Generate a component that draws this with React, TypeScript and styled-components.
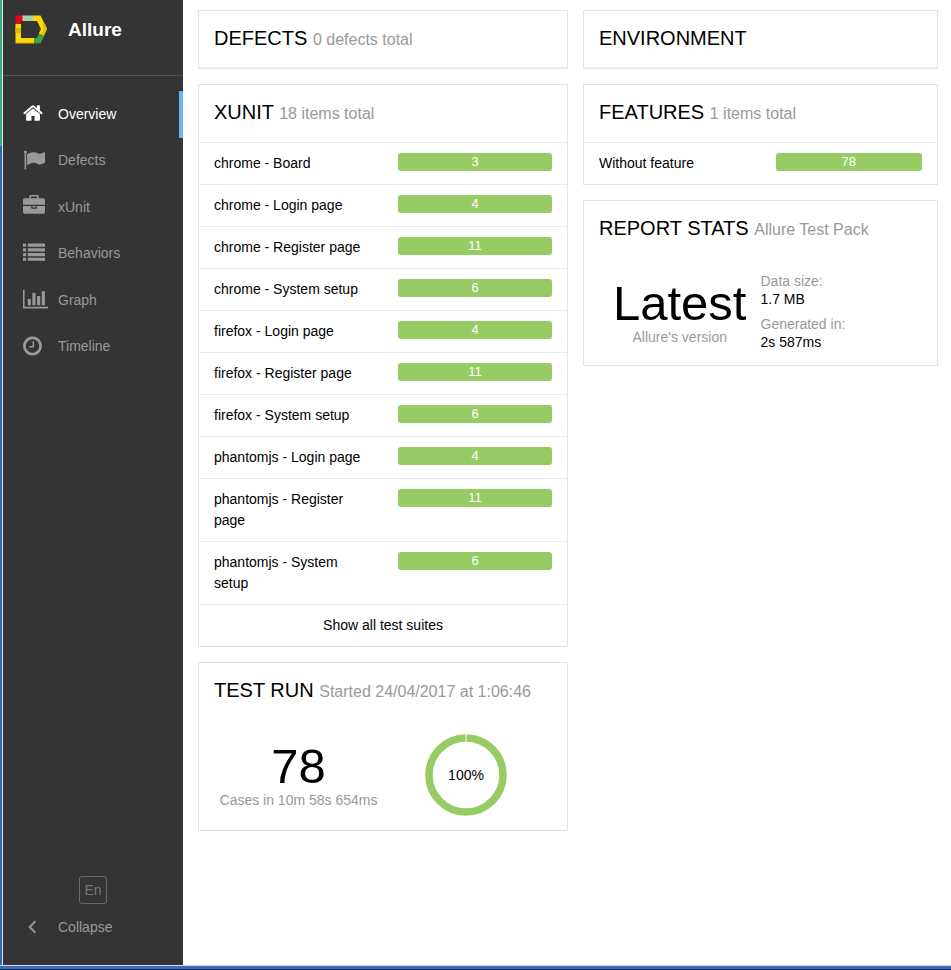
import React from "react";
import styled, { createGlobalStyle } from "styled-components";

const GlobalStyle = createGlobalStyle`
  *, *::before, *::after { box-sizing: border-box; }
  body {
    margin: 0;
    background: #fff;
    color: #000;
    font: 14px/21px "Liberation Sans", Arial, sans-serif;
  }
  h1, h2, ul, dl, dd { margin: 0; padding: 0; }
  ul { list-style: none; }
`;

const Desktop = styled.div`
  display: flex;
  flex-direction: column;
  min-height: 100vh;
`;

const Body = styled.div`
  display: flex;
  flex: 1;
`;

const LeftEdge = styled.div`
  width: 3px;
  border-right: 1px solid #e4e4ea;
  background: linear-gradient(#3fae7c 146px, #3465b8 146px);
`;

const BottomEdge = styled.div`
  height: 5px;
  border-top: 1px solid #d8dce2;
  border-bottom: 1px solid #1c2c50;
  background: #3a6cc4;
`;

const Sidebar = styled.aside`
  display: flex;
  flex-direction: column;
  width: 180px;
  background: #343434;
  color: #999;
`;

const Brand = styled.a`
  display: flex;
  align-items: flex-start;
  gap: 19px;
  height: 76px;
  padding: 15px 12px;
  border-bottom: 1px solid #505050;
  color: #fff;
  text-decoration: none;
`;

const BrandName = styled.span`
  font-size: 19px;
  line-height: 30px;
  font-weight: bold;
`;

const Menu = styled.ul`
  display: grid;
  grid-auto-rows: 1fr;
  height: 279px;
  margin-top: 15px;
`;

const MenuLink = styled.a<{ $active?: boolean }>`
  display: grid;
  grid-template-columns: 35px 1fr;
  align-items: center;
  height: 100%;
  padding-left: 20px;
  border-right: 4px solid ${(p) => (p.$active ? "#64b5f6" : "transparent")};
  color: ${(p) => (p.$active ? "#fff" : "#999")};
  text-decoration: none;
`;

const Glyph = styled.svg`
  display: block;
  height: 22px;
  margin-bottom: 2px;
  fill: currentColor;
`;

const SidebarFooter = styled.div`
  display: flex;
  flex-direction: column;
  margin-top: auto;
  padding-bottom: 14px;
`;

const LanguageButton = styled.button`
  align-self: center;
  width: 28px;
  height: 28px;
  padding: 0;
  border: 1px solid #6a6a6a;
  border-radius: 3px;
  background: none;
  color: #777;
  font: inherit;
`;

const CollapseButton = styled.button`
  display: grid;
  grid-template-columns: 35px 1fr;
  align-items: center;
  height: 47px;
  padding: 0 0 0 20px;
  border: 0;
  background: none;
  color: #999;
  font: inherit;
  text-align: left;
`;

const Dashboard = styled.main`
  display: grid;
  flex: 1;
  grid-template-columns: 370fr 355fr;
  gap: 15px;
  align-items: start;
  padding: 10px 13px 15px 15px;
`;

const Column = styled.div`
  display: grid;
  gap: 15px;
`;

const Card = styled.section`
  border: 1px solid #e4e4e4;
`;

const CardTitle = styled.h2<{ $ruled?: boolean }>`
  height: 57px;
  padding: 11px 15px 0;
  border-bottom: ${(p) => (p.$ruled ? "1px solid #eceff1" : "0")};
  font-size: 20px;
  line-height: 32px;
  font-weight: normal;
  white-space: nowrap;
`;

const Subtitle = styled.span`
  color: #999;
  font-size: 16px;
`;

const Row = styled.a`
  display: grid;
  grid-template-columns: 1fr 1fr;
  border-top: 1px solid #ececec;
  color: inherit;
  text-decoration: none;
`;

const RowName = styled.span`
  padding: 10px 15px;
`;

const RowStatus = styled.span`
  padding: 10px 15px;
`;

const Bar = styled.span`
  display: block;
  height: 18px;
  border-radius: 3px;
  background: #97cc64;
  color: #fff;
  font-size: 13px;
  line-height: 18px;
  text-align: center;
`;

const ShowAll = styled.a`
  display: block;
  padding: 10px 15px;
  border-top: 1px solid #ececec;
  color: inherit;
  text-align: center;
  text-decoration: none;
`;

const Summary = styled.div`
  display: grid;
  grid-template-columns: 1fr 1fr;
  align-items: center;
  padding: 14px 15px;
`;

const Headline = styled.div`
  text-align: center;
  white-space: nowrap;
`;

const BigValue = styled.div`
  font-size: 49px;
  line-height: 50px;
`;

const Caption = styled.div`
  color: #999;
  line-height: 18px;
`;

const RingHolder = styled.div`
  display: flex;
  justify-content: center;
  padding-right: 4px;
`;

const Facts = styled.dl`
  line-height: 18px;
`;

const FactName = styled.dt`
  color: #999;
`;

const FactValue = styled.dd`
  margin-bottom: 7px;
  &:last-child { margin-bottom: 0; }
`;

type IconProps = { box: string; width: number; children: React.ReactNode };

const Icon = ({ box, width, children }: IconProps) => (
  <Glyph viewBox={box} width={width} aria-hidden="true">
    {children}
  </Glyph>
);

const HomeIcon = (
  <Icon box="64 0 1664 1792" width={20}>
    <path d="M1472 992v480q0 26-19 45t-45 19h-384v-384h-256v384h-384q-26 0-45-19t-19-45v-480q0-1 .5-3t.5-3l575-474 575 474q1 2 1 6zm223-69l-62 74q-8 9-21 11h-3q-13 0-21-7l-692-577-692 577q-12 8-24 7-13-2-21-11l-62-74q-8-10-7-23.5t11-21.5l719-599q32-26 76-26t76 26l244 204v-195q0-14 9-23t23-9h192q14 0 23 9t9 23v408l219 182q10 8 11 21.5t-7 23.5z" />
  </Icon>
);

const FlagIcon = (
  <Icon box="0 0 1792 1792" width={22}>
    <path d="M320 256q0 72-64 110v1266q0 13-9.5 22.5t-22.5 9.5h-64q-13 0-22.5-9.5t-9.5-22.5v-1266q-64-38-64-110 0-53 37.5-90.5t90.5-37.5 90.5 37.5 37.5 90.5zm1472 64v763q0 25-12.5 38.5t-39.5 27.5q-215 116-369 116-61 0-123.5-22t-108.5-48-115.5-48-142.5-22q-192 0-464 146-17 9-33 9-26 0-45-19t-19-45v-742q0-32 31-55 21-14 79-43 236-120 421-120 107 0 200 29t219 88q38 19 88 19 54 0 117.5-21t110-47 88-47 54.5-21q26 0 45 19t19 45z" />
  </Icon>
);

const BriefcaseIcon = (
  <Icon box="0 0 1792 1792" width={22}>
    <path d="M640 256h512v-128h-512v128zm1152 640v480q0 66-47 113t-113 47h-1472q-66 0-113-47t-47-113v-480h672v160q0 26 19 45t45 19h320q26 0 45-19t19-45v-160h672zm-768 0v128h-256v-128h256zm768-480v384h-1792v-384q0-66 47-113t113-47h352v-160q0-40 28-68t68-28h576q40 0 68 28t28 68v160h352q66 0 113 47t47 113z" />
  </Icon>
);

const ListIcon = (
  <Icon box="0 0 1792 1792" width={22}>
    {[128, 512, 896, 1280].map((y) => (
      <React.Fragment key={y}>
        <rect x="0" y={y} width="256" height="256" rx="32" />
        <rect x="384" y={y} width="1408" height="256" rx="32" />
      </React.Fragment>
    ))}
  </Icon>
);

const ChartIcon = (
  <Icon box="0 0 2048 1792" width={25}>
    <path d="M640 896v512h-256v-512h256zm384-512v1024h-256v-1024h256zm1024 1152v128h-2048v-1536h128v1408h1920zm-640-896v768h-256v-768h256zm384-384v1152h-256v-1152h256z" />
  </Icon>
);

const ClockIcon = (
  <Icon box="128 0 1536 1792" width={19}>
    <path d="M1024 544v448q0 14-9 23t-23 9h-320q-14 0-23-9t-9-23v-64q0-14 9-23t23-9h224v-352q0-14 9-23t23-9h64q14 0 23 9t9 23zm416 352q0-148-73-273t-198-198-273-73-273 73-198 198-73 273 73 273 198 198 273 73 273-73 198-198 73-273zm224 0q0 209-103 385.5t-279.5 279.5-385.5 103-385.5-103-279.5-279.5-103-385.5 103-385.5 279.5-279.5 385.5-103 385.5 103 279.5 279.5 103 385.5z" />
  </Icon>
);

const AngleLeftIcon = (
  <Icon box="160 64 1472 1792" width={18}>
    <path
      d="M1203 544q0 13-10 23l-393 393 393 393q10 10 10 23t-10 23l-50 50q-10 10-23 10t-23-10l-466-466q-10-10-10-23t10-23l466-466q10-10 23-10t23 10l50 50q10 10 10 23z"
      stroke="currentColor"
      strokeWidth="40"
    />
  </Icon>
);

const Logo = () => (
  <svg width="34" height="30" viewBox="0 0 34 30" aria-hidden="true">
    <path d="M3 0.500H10V6H6V10H0.500V0.500Z" fill="#e30613" />
    <path d="M7.500 0.500H19V6H7.500Z" fill="#a8d3a5" />
    <path d="M18.500 0.500H25.500L32 14L28.800 21L23.800 18.500L26 14L22 6H18.500Z" fill="#ffd900" />
    <path d="M27.500 9L30 8.500L32 14L28.800 21L26.500 19.500L29 14Z" fill="#e3c000" />
    <path d="M23.800 18.800L29 21L25.500 28.500H18.500V23H22Z" fill="#3da73f" />
    <path d="M0.500 9H6V23H19V28.500H0.500Z" fill="#ffd900" />
    <path d="M0.500 13H6V18H0.500Z" fill="#dbbb00" />
    <path d="M1 28H25.500" stroke="#000" strokeOpacity="0.2" />
  </svg>
);

const MENU = [
  { label: "Overview", icon: HomeIcon, active: true },
  { label: "Defects", icon: FlagIcon },
  { label: "xUnit", icon: BriefcaseIcon },
  { label: "Behaviors", icon: ListIcon },
  { label: "Graph", icon: ChartIcon },
  { label: "Timeline", icon: ClockIcon },
];

const SUITES: [string, number][] = [
  ["chrome - Board", 3],
  ["chrome - Login page", 4],
  ["chrome - Register page", 11],
  ["chrome - System setup", 6],
  ["firefox - Login page", 4],
  ["firefox - Register page", 11],
  ["firefox - System setup", 6],
  ["phantomjs - Login page", 4],
  ["phantomjs - Register page", 11],
  ["phantomjs - System setup", 6],
];

const ResultRow = ({ name, passed }: { name: string; passed: number }) => (
  <li>
    <Row href="#">
      <RowName>{name}</RowName>
      <RowStatus>
        <Bar>{passed}</Bar>
      </RowStatus>
    </Row>
  </li>
);

const Ring = () => (
  <svg width="82" height="82" viewBox="0 0 82 82" role="img" aria-label="100% passed">
    <circle cx="41" cy="41" r="37" fill="none" stroke="#97cc64" strokeWidth="7.500" />
    <path d="M41 0V8" stroke="#fff" />
    <text x="41" y="46" textAnchor="middle" fontSize="14">
      100%
    </text>
  </svg>
);

export default function App() {
  return (
    <Desktop>
      <GlobalStyle />
      <Body>
        <LeftEdge />
        <Sidebar>
          <Brand href="#">
            <Logo />
            <BrandName>Allure</BrandName>
          </Brand>
          <nav>
            <Menu>
              {MENU.map((item) => (
                <li key={item.label}>
                  <MenuLink href="#" $active={item.active}>
                    {item.icon}
                    <span>{item.label}</span>
                  </MenuLink>
                </li>
              ))}
            </Menu>
          </nav>
          <SidebarFooter>
            <LanguageButton type="button">En</LanguageButton>
            <CollapseButton type="button">
              {AngleLeftIcon}
              <span>Collapse</span>
            </CollapseButton>
          </SidebarFooter>
        </Sidebar>
        <Dashboard>
          <Column>
            <Card>
              <CardTitle $ruled>
                DEFECTS <Subtitle>0 defects total</Subtitle>
              </CardTitle>
            </Card>
            <Card>
              <CardTitle>
                XUNIT <Subtitle>18 items total</Subtitle>
              </CardTitle>
              <ul>
                {SUITES.map(([name, passed]) => (
                  <ResultRow key={name} name={name} passed={passed} />
                ))}
              </ul>
              <ShowAll href="#">Show all test suites</ShowAll>
            </Card>
            <Card>
              <CardTitle>
                TEST RUN <Subtitle>Started 24/04/2017 at 1:06:46</Subtitle>
              </CardTitle>
              <Summary>
                <Headline>
                  <BigValue>78</BigValue>
                  <Caption>Cases in 10m 58s 654ms</Caption>
                </Headline>
                <RingHolder>
                  <Ring />
                </RingHolder>
              </Summary>
            </Card>
          </Column>
          <Column>
            <Card>
              <CardTitle $ruled>ENVIRONMENT</CardTitle>
            </Card>
            <Card>
              <CardTitle>
                FEATURES <Subtitle>1 items total</Subtitle>
              </CardTitle>
              <ul>
                <ResultRow name="Without feature" passed={78} />
              </ul>
            </Card>
            <Card>
              <CardTitle>
                REPORT STATS <Subtitle>Allure Test Pack</Subtitle>
              </CardTitle>
              <Summary>
                <Headline>
                  <BigValue>Latest</BigValue>
                  <Caption>Allure's version</Caption>
                </Headline>
                <Facts>
                  <FactName>Data size:</FactName>
                  <FactValue>1.7 MB</FactValue>
                  <FactName>Generated in:</FactName>
                  <FactValue>2s 587ms</FactValue>
                </Facts>
              </Summary>
            </Card>
          </Column>
        </Dashboard>
      </Body>
      <BottomEdge />
    </Desktop>
  );
}
